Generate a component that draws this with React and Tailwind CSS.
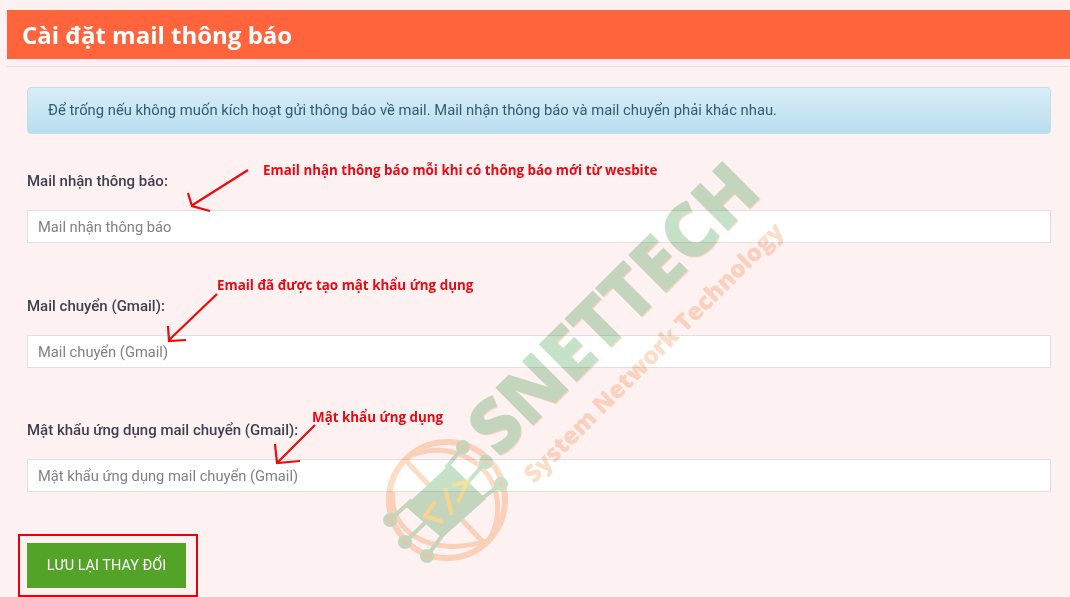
import React from 'react';

const fields = [
  { label: 'Mail nhận thông báo:', placeholder: 'Mail nhận thông báo', gap: 'mt-[37px]' },
  { label: 'Mail chuyển (Gmail):', placeholder: 'Mail chuyển (Gmail)', gap: 'mt-[53px]' },
  { label: 'Mật khẩu ứng dụng mail chuyển (Gmail):', placeholder: 'Mật khẩu ứng dụng mail chuyển (Gmail)', gap: 'mt-[52px]' },
];

const notes = [
  { text: 'Email nhận thông báo mỗi khi có thông báo mới từ wesbite', pos: 'left-[263px] top-[161px]' },
  { text: 'Email đã được tạo mật khẩu ứng dụng', pos: 'left-[217px] top-[276px]' },
  { text: 'Mật khẩu ứng dụng', pos: 'left-[312px] top-[408px]' },
];

const nodes = [
  [390, 520],
  [405, 542],
  [427, 556],
  [463, 447],
  [486, 462],
  [501, 484],
];

// red hand-drawn arrows from the annotation layer
function Arrows() {
  return (
    <svg className="absolute left-0 top-0 pointer-events-none" width="1070" height="597" fill="none" stroke="#ee0a0a" strokeWidth="2.2">
      <path d="M248 170L191 206M188 193L192 206L210 211" />
      <path d="M217 294L169 340M168 326L169 341L186 340" />
      <path d="M315 425L277 463M275 444L277 463L300 461" />
    </svg>
  );
}

// brand watermark lying over the form, multiplied so the input borders show through
function Watermark() {
  const font = "'Open Sans', sans-serif";
  return (
    <svg className="absolute left-0 top-0 pointer-events-none mix-blend-multiply" width="1070" height="597" fill="none">
      <text transform="translate(500 460) rotate(-45)" fontFamily={font} fontWeight="800" fontSize="74" fill="#fcdcc8" letterSpacing="-0.5">SNETTECH</text>
      <text transform="translate(499 459) rotate(-45)" fontFamily={font} fontWeight="800" fontSize="74" fill="#c5e2c8" letterSpacing="-0.5">SNETTECH</text>
      <text transform="translate(534 484) rotate(-45)" fontFamily={font} fontWeight="800" fontSize="24" fill="#fddcc8">System Network Technology</text>

      {/* globe */}
      <circle cx="447" cy="500" r="58" stroke="#fddbc4" strokeWidth="6" />
      <path d="M407 462L483 542M413 455C445 440 505 460 497 518Q495 530 490 538M393 492C388 530 430 560 490 540" stroke="#fddbc4" strokeWidth="5" />

      {/* chip with traces */}
      <path d="M405 506L450 464L486 499L442 538Z" fill="#c5e2c8" />
      <path d="M390 520L412 500M405 542L426 522M427 556L445 532M463 447L446 468M486 462L468 482M501 484L480 500" stroke="#c5e2c8" strokeWidth="4" />
      {nodes.map(([x, y]) => (
        <g key={x}>
          <circle cx={x} cy={y} r="7" fill="#c5e2c8" />
          <circle cx={x} cy={y} r="2.5" fill="#f6c9ac" />
        </g>
      ))}
      <path d="M435 502L425 516L443 522M445 488L452 515M452 485L467 482L458 502" stroke="#f8e09a" strokeWidth="4" />
    </svg>
  );
}

export default function App() {
  return (
    <div className="relative w-[1070px] h-[597px] overflow-hidden bg-[#fdf2f1] pt-[10px] pl-[7px] font-['Roboto',sans-serif]">
      <h1 className="h-[49px] bg-[#ff643c] pl-[15px] text-[24px] leading-[49px] font-bold text-white font-['Open_Sans',sans-serif]">
        Cài đặt mail thông báo
      </h1>
      <div className="mt-[7px] h-px bg-[#e0dfe3]" />

      <div className="pl-[20px] pr-[19px] pt-[20px]">
        <div className="h-[47px] rounded-[4px] border border-[#bce0ec] bg-gradient-to-b from-[#d9edf7] to-[#b9def0] pl-[20px] text-[14.8px] leading-[45px] text-[#2f5f6e]">
          Để trống nếu không muốn kích hoạt gửi thông báo về mail. Mail nhận thông báo và mail chuyển phải khác nhau.
        </div>

        {fields.map((f) => (
          <div key={f.label} className={f.gap}>
            <label className="block text-[15px] leading-[20px] font-medium text-[#3f3f52]">{f.label}</label>
            <input
              readOnly
              placeholder={f.placeholder}
              className="mt-[19px] block h-[33px] w-full border border-[#e0dfe3] bg-white px-[10px] text-[14.7px] outline-none placeholder:text-[#808085]"
            />
          </div>
        ))}

        <button className="mt-[51px] h-[45px] w-[159px] bg-[#52a327] pt-px text-[14.5px] text-white">
          LƯU LẠI THAY ĐỔI
        </button>
      </div>

      <Watermark />

      {notes.map((n) => (
        <span key={n.text} className={`absolute ${n.pos} text-[13.4px] leading-[18px] font-bold whitespace-nowrap text-[#e60a14] font-['Open_Sans',sans-serif]`}>
          {n.text}
        </span>
      ))}
      <Arrows />
      <div className="absolute left-[18px] top-[534px] h-[63px] w-[180px] border-2 border-[#e8000d] pointer-events-none" />
    </div>
  );
}
